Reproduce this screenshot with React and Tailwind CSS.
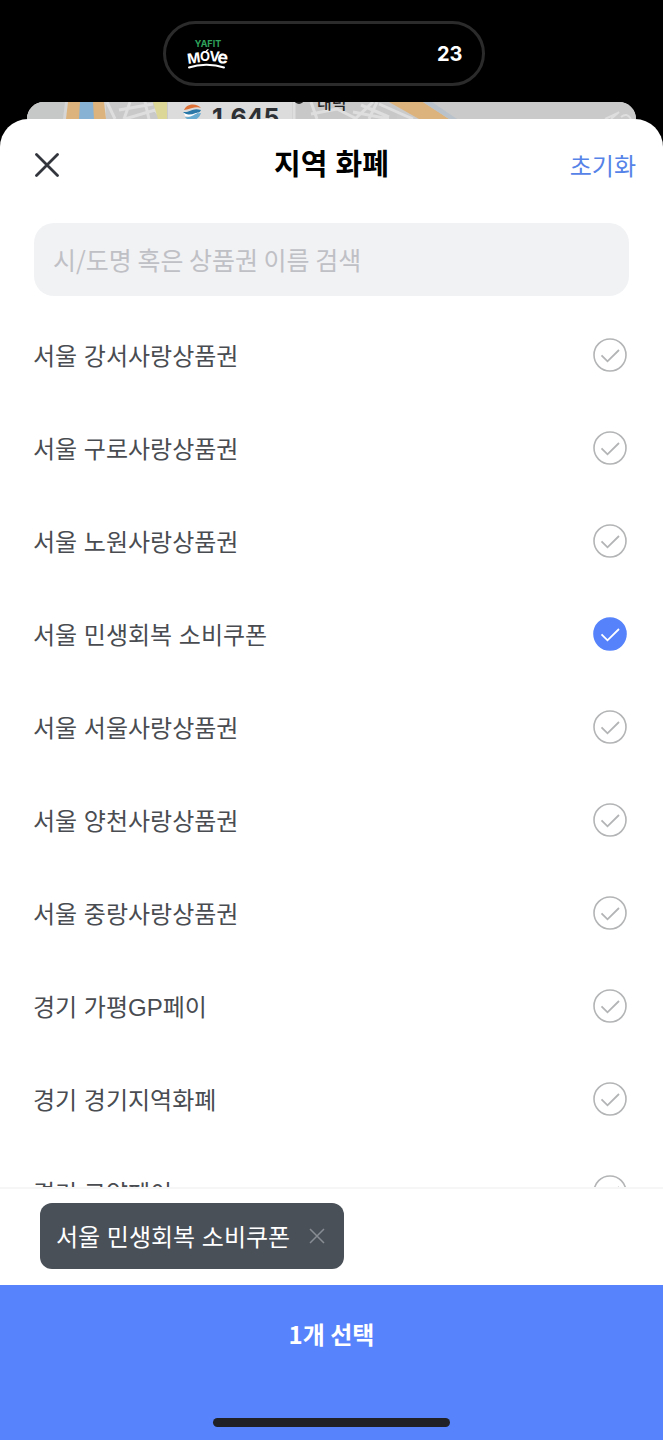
import { useState } from "react";

const CURRENCIES = [
  "서울 강서사랑상품권",
  "서울 구로사랑상품권",
  "서울 노원사랑상품권",
  "서울 민생회복 소비쿠폰",
  "서울 서울사랑상품권",
  "서울 양천사랑상품권",
  "서울 중랑사랑상품권",
  "경기 가평GP페이",
  "경기 경기지역화폐",
  "경기 고양페이",
];

function MoveLogo() {
  return (
    <svg viewBox="0 0 44 32" className="h-8 w-11" role="img" aria-label="YAFIT MOVE">
      <text x="22" y="9" textAnchor="middle" fontSize="9" fontWeight="700" fill="#2fa35c" fontFamily="Inter, sans-serif">
        YAFIT
      </text>
      <g fill="#fff" fontFamily="Inter, sans-serif" fontWeight="700">
        <text x="2" y="26" fontSize="14" transform="rotate(-8 2 26)">M</text>
        <text x="14" y="23" fontSize="13">O</text>
        <text x="23" y="23" fontSize="14" transform="rotate(4 23 23)">V</text>
        <text x="31" y="25" fontSize="18" transform="rotate(4 31 25)">e</text>
      </g>
      <path d="M3 29.5C13 26 27 25.5 38 29.5" fill="none" stroke="#fff" strokeWidth="2" strokeLinecap="round" />
      <path d="M20.5 12.8l1.5-1.2" stroke="#fff" strokeWidth="1.2" strokeLinecap="round" />
    </svg>
  );
}

function StatusArea() {
  return (
    <div className="flex shrink-0 justify-center pt-[21px]">
      <div className="mr-4 flex h-[65px] w-[322px] items-center justify-between rounded-full border-[3px] border-[#2b2b2b] bg-black pr-[19px] pl-5">
        <MoveLogo />
        <span className="font-[Inter,sans-serif] text-[20px] leading-6 font-bold text-white">23</span>
      </div>
    </div>
  );
}

function MapPeek() {
  return (
    <div className="relative mt-4 mr-[27px] ml-[27px] h-[17px] shrink-0 overflow-hidden rounded-t-[20px] bg-[#c9c9c9]" aria-hidden="true">
      <svg viewBox="0 0 609 17" preserveAspectRatio="none" className="h-full w-full">
        <rect width="609" height="17" fill="#cacaca" />
        <path d="M0 0H40L36 17H0z" fill="#c6c7c7" />
        <path d="M38 0H79V17H36z" fill="#d6d6d6" />
        <path d="M41 0H77L79 17H39z" fill="#dcb37c" />
        <path d="M53 0H66L67 17H52z" fill="#87b2d3" />
        <path d="M80 0H140V17H84z" fill="#c9c9c9" />
        <path d="M80 0l8 17M92 8l34-6M103 0l-6 17M118 0l4 17M98 17l30-9 8 9" stroke="#dedede" strokeWidth="3" fill="none" />
        <path d="M126 0H140V17H131z" fill="#dcd697" />
        <rect x="141" width="124" height="17" fill="#dcdcdc" />
        <path d="M265 0H370V17H265z" fill="#c8c8c8" />
        <path d="M267 0v17M284 0l6 17M284 12l26-5 20 10" stroke="#dedede" strokeWidth="3" fill="none" />
        <path d="M346 0l-18 17M326 10l36 7M334 3l28 12M350 0l-8 17M352 2l34 15" stroke="#dedede" strokeWidth="3" fill="none" />
        <path d="M362 0H396L422 17H392z" fill="#dcb37c" />
        <path d="M396 0h9l25 17h-8z" fill="#b9c2ca" />
        <path d="M578 17l13-6M584 17l8-7M594 15q6-5 10 2" stroke="#dedede" strokeWidth="2" fill="none" />
        <circle cx="272" cy="-3" r="5" fill="#222" />
      </svg>
      <svg viewBox="0 0 20 17" className="absolute top-[2px] left-[155px] h-[17px] w-5">
        <path d="M2 6C5-1 15-1 19 4 14 2 9 5 2 6z" fill="#df7136" />
        <path d="M1 8c7 1 9-5 18-2-3 6-11 8-18 2z" fill="#2978a8" />
        <path d="M3 13c7 1 10-4 16-4-2 7-11 11-16 4z" fill="#67abd0" />
        <path d="M2 9c7 4 11-1 17-1-5 1-9 6-16 4z" fill="#fff" />
      </svg>
      <span className="absolute top-[2px] left-[185px] font-[Inter,sans-serif] text-[25px] leading-7 font-bold text-[#2d3034]">1,645</span>
      <span className="absolute top-[-12px] left-[290px] font-['Noto_Sans_CJK_KR',sans-serif] text-[16px] leading-6 font-medium text-[#222]">대덕</span>
    </div>
  );
}

function CurrencyRow({ name, checked, onToggle }) {
  return (
    <li>
      <label className="relative flex h-[93px] cursor-pointer items-center justify-between">
        <span className="pt-1">{name}</span>
        <input type="checkbox" checked={checked} onChange={onToggle} className="peer sr-only" />
        <svg
          viewBox="0 0 34 34"
          fill="none"
          aria-hidden="true"
          className="size-[34px] text-[#b3b4b5] peer-checked:text-white peer-focus-visible:outline-2"
        >
          <circle
            cx="17"
            cy="17"
            r="16"
            fill={checked ? "#5683fb" : "none"}
            stroke={checked ? "#5683fb" : "currentColor"}
            strokeWidth="1.6"
          />
          <path d="M8.5 17.3l6 6L26 12" stroke="currentColor" strokeWidth="1.8" />
        </svg>
      </label>
    </li>
  );
}

export default function App() {
  const [query, setQuery] = useState("");
  const [selected, setSelected] = useState(["서울 민생회복 소비쿠폰"]);
  const toggle = (name) =>
    setSelected((s) => (s.includes(name) ? s.filter((n) => n !== name) : [...s, name]));

  return (
    <div className="flex h-dvh flex-col overflow-hidden bg-black font-['Liberation_Sans','Noto_Sans_CJK_KR',sans-serif] text-[24px] leading-8 text-[#494c51]">
      <StatusArea />
      <MapPeek />
      <main className="flex min-h-0 flex-1 flex-col overflow-hidden rounded-t-[28px] bg-white">
        <header className="grid h-[90px] shrink-0 grid-cols-[1fr_auto_1fr] items-center px-[27px] pt-0.5">
          <button type="button" aria-label="닫기" className="justify-self-start p-2">
            <svg viewBox="0 0 24 24" className="size-6" fill="none" stroke="#33363d" strokeWidth="2.8" strokeLinecap="round">
              <path d="M1.5 1.5l21 21M22.5 1.5l-21 21" />
            </svg>
          </button>
          <h1 className="text-[29px] leading-10 font-bold text-black">지역 화폐</h1>
          <button type="button" onClick={() => setSelected([])} className="justify-self-end pt-1 text-[#5683e8]">
            초기화
          </button>
        </header>
        <div className="shrink-0 px-[34px] pt-[14px] pb-3">
          <input
            type="text"
            value={query}
            onChange={(e) => setQuery(e.target.value)}
            aria-label="지역 화폐 검색"
            placeholder="시/도명 혹은 상품권 이름 검색"
            className="h-[73px] w-full rounded-[20px] bg-[#f1f2f4] px-[19px] pb-0.5 font-['Noto_Sans_CJK_KR',sans-serif] text-[25px] outline-none placeholder:text-[#bfc0c5]"
          />
        </div>
        <ul className="min-h-0 flex-1 overflow-y-auto pr-9 pl-[33px] [scrollbar-width:none]">
          {CURRENCIES.filter((c) => c.includes(query)).map((name) => (
            <CurrencyRow key={name} name={name} checked={selected.includes(name)} onToggle={() => toggle(name)} />
          ))}
        </ul>
        <div className="flex shrink-0 gap-3 overflow-x-auto border-t-2 border-[#f6f6f6] px-10 pt-[14px] pb-4 [scrollbar-width:none]">
          {selected.map((name) => (
            <div key={name} className="flex h-[66px] shrink-0 items-center gap-[11px] rounded-xl bg-[#4a5058] pr-[11px] pl-4 text-white">
              <span className="pt-1">{name}</span>
              <button type="button" aria-label={`${name} 삭제`} onClick={() => toggle(name)} className="p-2">
                <svg viewBox="0 0 16 16" className="size-4" fill="none" stroke="#888d93" strokeWidth="1.5">
                  <path d="M1 1l14 14M15 1L1 15" />
                </svg>
              </button>
            </div>
          ))}
        </div>
        <button type="button" className="flex h-[155px] shrink-0 flex-col items-center justify-between bg-[#5784fc] pt-[33px] pb-[13px] font-['Noto_Sans_CJK_KR',sans-serif] font-bold text-white">
          {selected.length}개 선택
          <span className="h-[9px] w-[237px] rounded-full bg-[#1f2126]" />
        </button>
      </main>
    </div>
  );
}
